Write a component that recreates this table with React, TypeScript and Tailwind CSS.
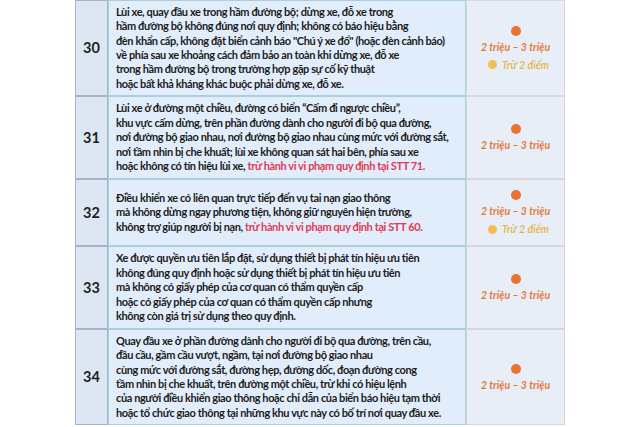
import React from "react";

type Row = {
  no: string;
  h: string;
  lines: React.ReactNode[];
  points?: boolean;
};

const RED = "text-[#e03a52]";

const rows: Row[] = [
  {
    no: "30",
    h: "h-[96px]",
    points: true,
    lines: [
      "Lùi xe, quay đầu xe trong hầm đường bộ; dừng xe, đỗ xe trong",
      "hầm đường bộ không đúng nơi quy định; không có báo hiệu bằng",
      "đèn khẩn cấp, không đặt biển cảnh báo \"Chú ý xe đổ\" (hoặc đèn cảnh báo)",
      "về phía sau xe khoảng cách đảm bảo an toàn khi dừng xe, đỗ xe",
      "trong hầm đường bộ trong trường hợp gặp sự cố kỹ thuật",
      "hoặc bất khả kháng khác buộc phải dừng xe, đỗ xe.",
    ],
  },
  {
    no: "31",
    h: "h-[83px]",
    lines: [
      "Lùi xe ở đường một chiều, đường có biển “Cấm đi ngược chiều”,",
      "khu vực cấm dừng, trên phần đường dành cho người đi bộ qua đường,",
      "nơi đường bộ giao nhau, nơi đường bộ giao nhau cùng mức với đường sắt,",
      "nơi tầm nhìn bị che khuất; lùi xe không quan sát hai bên, phía sau xe",
      <>
        hoặc không có tín hiệu lùi xe,{" "}
        <span className={RED}>trừ hành vi vi phạm quy định tại STT 71.</span>
      </>,
    ],
  },
  {
    no: "32",
    h: "h-[67px]",
    points: true,
    lines: [
      "Điều khiển xe có liên quan trực tiếp đến vụ tai nạn giao thông",
      "mà không dừng ngay phương tiện, không giữ nguyên hiện trường,",
      <>
        không trợ giúp người bị nạn,{" "}
        <span className={RED}>trừ hành vi vi phạm quy định tại STT 60.</span>
      </>,
    ],
  },
  {
    no: "33",
    h: "h-[83px]",
    lines: [
      "Xe được quyền ưu tiên lắp đặt, sử dụng thiết bị phát tín hiệu ưu tiên",
      "không đúng quy định hoặc sử dụng thiết bị phát tín hiệu ưu tiên",
      "mà không có giấy phép của cơ quan có thẩm quyền cấp",
      "hoặc có giấy phép của cơ quan có thẩm quyền cấp nhưng",
      "không còn giá trị sử dụng theo quy định.",
    ],
  },
  {
    no: "34",
    h: "h-[96px]",
    lines: [
      "Quay đầu xe ở phần đường dành cho người đi bộ qua đường, trên cầu,",
      "đầu cầu, gầm cầu vượt, ngầm, tại nơi đường bộ giao nhau",
      "cùng mức với đường sắt, đường hẹp, đường dốc, đoạn đường cong",
      "tầm nhìn bị che khuất, trên đường một chiều, trừ khi có hiệu lệnh",
      "của người điều khiển giao thông hoặc chỉ dẫn của biển báo hiệu tạm thời",
      "hoặc tổ chức giao thông tại những khu vực này có bố trí nơi quay đầu xe.",
    ],
  },
];

function Penalty({ points }: { points?: boolean }) {
  return (
    <div className="flex flex-col items-center">
      <span className="w-[10px] h-[10px] rounded-full bg-[#e8742f]" />
      <span className="mt-[5px] text-[10.5px] leading-[12px] font-bold italic text-[#e57a3c]">
        2 triệu – 3 triệu
      </span>
      {points && (
        <div className="mt-[6px] flex items-center gap-[5px] pl-[6px]">
          <span className="w-[9px] h-[9px] rounded-full bg-[#f3bf55]" />
          <span className="text-[10.5px] leading-[12px] italic font-semibold text-[#e4b548]">
            Trừ 2 điểm
          </span>
        </div>
      )}
    </div>
  );
}

export default function App() {
  return (
    <div className="w-[640px] h-[427px] bg-white overflow-hidden font-['Lato','Open_Sans',sans-serif]">
      <div className="ml-[75px] w-[490px] flex flex-col">
        {rows.map((r) => (
          <div key={r.no} className={`flex ${r.h}`}>
            <div className="w-[33px] shrink-0 flex items-center justify-center bg-[#dde7f3] border border-[#a3b6c8] text-[14.5px] font-bold text-[#1f1f1f]">
              {r.no}
            </div>
            <div className="w-[358px] shrink-0 flex flex-col justify-center pl-[7px] bg-[#e2edfb] border border-[#a7cfdc] text-[11px] leading-[14.4px] font-bold tracking-[-0.4px] text-[#1c1c1c] whitespace-nowrap">
              {r.lines.map((l, i) => (
                <div key={i}>{l}</div>
              ))}
            </div>
            <div className="w-[99px] shrink-0 flex items-center justify-center bg-[#e8eef8] border border-[#dbd4d9]">
              <Penalty points={r.points} />
            </div>
          </div>
        ))}
      </div>
    </div>
  );
}
